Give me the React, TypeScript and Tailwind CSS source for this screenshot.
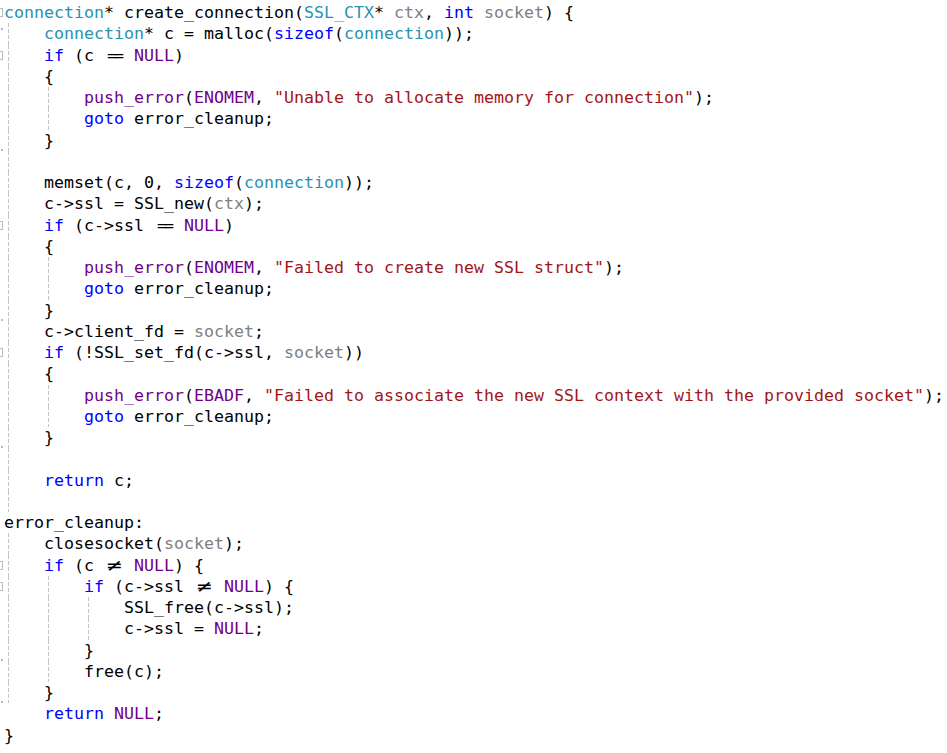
import React from 'react';

// ─── Types ────────────────────────────────────────────────────────────────────

type Kind = 'k' | 't' | 'm' | 's' | 'p' | 'EQ' | 'NE' | '';
type Tok = [string, Kind?];

interface Line {
  indent: number;
  guides: number;
  mark?: 'fold' | 'end' | 'top';
  toks: Tok[];
}

// ─── Colours (VS light theme) ─────────────────────────────────────────────────

const color: Record<string, string> = {
  k: 'text-[#0000ff]',
  t: 'text-[#2b91af]',
  m: 'text-[#6f008a]',
  s: 'text-[#a31515]',
  p: 'text-[#808080]',
  '': 'text-[#000000]',
};

// ─── Source ───────────────────────────────────────────────────────────────────

const LINES: Line[] = [
  { indent: 0, guides: 0, mark: 'fold', toks: [['connection', 't'], ['* create_connection('], ['SSL_CTX', 't'], ['* '], ['ctx', 'p'], [', '], ['int', 'k'], [' '], ['socket', 'p'], [') {']] },
  { indent: 1, guides: 1, mark: 'top', toks: [['connection', 't'], ['* c = malloc('], ['sizeof', 'k'], ['('], ['connection', 't'], ['));']] },
  { indent: 1, guides: 1, mark: 'fold', toks: [['if', 'k'], [' (c '], ['==', 'EQ'], [' '], ['NULL', 'm'], [')']] },
  { indent: 1, guides: 1, toks: [['{']] },
  { indent: 2, guides: 2, toks: [['push_error', 'm'], ['('], ['ENOMEM', 'm'], [', '], ['"Unable to allocate memory for connection"', 's'], [');']] },
  { indent: 2, guides: 2, toks: [['goto', 'k'], [' error_cleanup;']] },
  { indent: 1, guides: 1, mark: 'end', toks: [['}']] },
  { indent: 0, guides: 1, toks: [] },
  { indent: 1, guides: 1, toks: [['memset(c, 0, '], ['sizeof', 'k'], ['('], ['connection', 't'], ['));']] },
  { indent: 1, guides: 1, toks: [['c->ssl = SSL_new('], ['ctx', 'p'], [');']] },
  { indent: 1, guides: 1, mark: 'fold', toks: [['if', 'k'], [' (c->ssl '], ['==', 'EQ'], [' '], ['NULL', 'm'], [')']] },
  { indent: 1, guides: 1, toks: [['{']] },
  { indent: 2, guides: 2, toks: [['push_error', 'm'], ['('], ['ENOMEM', 'm'], [', '], ['"Failed to create new SSL struct"', 's'], [');']] },
  { indent: 2, guides: 2, toks: [['goto', 'k'], [' error_cleanup;']] },
  { indent: 1, guides: 1, mark: 'end', toks: [['}']] },
  { indent: 1, guides: 1, toks: [['c->client_fd = '], ['socket', 'p'], [';']] },
  { indent: 1, guides: 1, mark: 'fold', toks: [['if', 'k'], [' (!SSL_set_fd(c->ssl, '], ['socket', 'p'], ['))']] },
  { indent: 1, guides: 1, toks: [['{']] },
  { indent: 2, guides: 2, toks: [['push_error', 'm'], ['('], ['EBADF', 'm'], [', '], ['"Failed to associate the new SSL context with the provided socket"', 's'], [');']] },
  { indent: 2, guides: 2, toks: [['goto', 'k'], [' error_cleanup;']] },
  { indent: 1, guides: 1, mark: 'end', toks: [['}']] },
  { indent: 0, guides: 1, toks: [] },
  { indent: 1, guides: 1, toks: [['return', 'k'], [' c;']] },
  { indent: 0, guides: 1, toks: [] },
  { indent: 0, guides: 0, toks: [['error_cleanup:']] },
  { indent: 1, guides: 1, toks: [['closesocket('], ['socket', 'p'], [');']] },
  { indent: 1, guides: 1, mark: 'fold', toks: [['if', 'k'], [' (c '], ['!=', 'NE'], [' '], ['NULL', 'm'], [') {']] },
  { indent: 2, guides: 2, mark: 'fold', toks: [['if', 'k'], [' (c->ssl '], ['!=', 'NE'], [' '], ['NULL', 'm'], [') {']] },
  { indent: 3, guides: 3, toks: [['SSL_free(c->ssl);']] },
  { indent: 3, guides: 3, toks: [['c->ssl = '], ['NULL', 'm'], [';']] },
  { indent: 2, guides: 2, mark: 'end', toks: [['}']] },
  { indent: 2, guides: 2, toks: [['free(c);']] },
  { indent: 1, guides: 1, mark: 'end', toks: [['}']] },
  { indent: 1, guides: 0, toks: [['return', 'k'], [' '], ['NULL', 'm'], [';']] },
  { indent: 0, guides: 0, toks: [['}']] },
];

// ─── Pieces ───────────────────────────────────────────────────────────────────

function Gutter({ mark }: { mark?: Line['mark'] }) {
  if (mark === 'fold') {
    return (
      <div className="w-[4px] shrink-0 flex items-center overflow-hidden">
        <div className="ml-[-6px] w-[9px] h-[9px] shrink-0 border border-[#bdbdbd] bg-white" />
      </div>
    );
  }
  if (mark === 'end') {
    return (
      <div className="w-[4px] shrink-0 flex items-end overflow-hidden">
        <div className="ml-px w-[2px] h-[2px] bg-[#b8b8b8]" />
      </div>
    );
  }
  if (mark === 'top') {
    return (
      <div className="w-[4px] shrink-0 flex items-start pt-[5px] overflow-hidden">
        <div className="ml-px w-[2px] h-[2px] bg-[#b8b8b8]" />
      </div>
    );
  }
  return <div className="w-[4px] shrink-0" />;
}

function Token({ tok }: { tok: Tok }) {
  const [text, kind = ''] = tok;
  if (kind === 'EQ') {
    return <span className="inline-block ml-[3px] mr-[3px] tracking-[-3px] text-[#000000]">{text}</span>;
  }
  if (kind === 'NE') {
    return <span className="inline-block w-[20px] text-center scale-x-[1.5] text-[#000000]">≠</span>;
  }
  return <span className={color[kind]}>{text}</span>;
}

function CodeLine({ line }: { line: Line }) {
  return (
    <div className="flex h-[21.25px]">
      <Gutter mark={line.mark} />
      {Array.from({ length: Math.max(line.indent, line.guides) }).map((_, i) => (
        <div key={i} className="w-[40px] shrink-0 flex">
          {i < line.guides && (
            <div className="ml-[4px] w-px self-stretch bg-[repeating-linear-gradient(to_bottom,#c4c4c4_0px,#c4c4c4_4px,transparent_4px,transparent_6px)]" />
          )}
        </div>
      ))}
      <div className="whitespace-pre">
        {line.toks.map((t, i) => (
          <Token key={i} tok={t} />
        ))}
      </div>
    </div>
  );
}

// ─── Main ─────────────────────────────────────────────────────────────────────

export default function App() {
  return (
    <div className="min-h-screen w-full overflow-hidden bg-white pt-[2px] font-['DejaVu_Sans_Mono',monospace] text-[16.61px] leading-[21.25px] text-black">
      {LINES.map((line, i) => (
        <CodeLine key={i} line={line} />
      ))}
    </div>
  );
}
